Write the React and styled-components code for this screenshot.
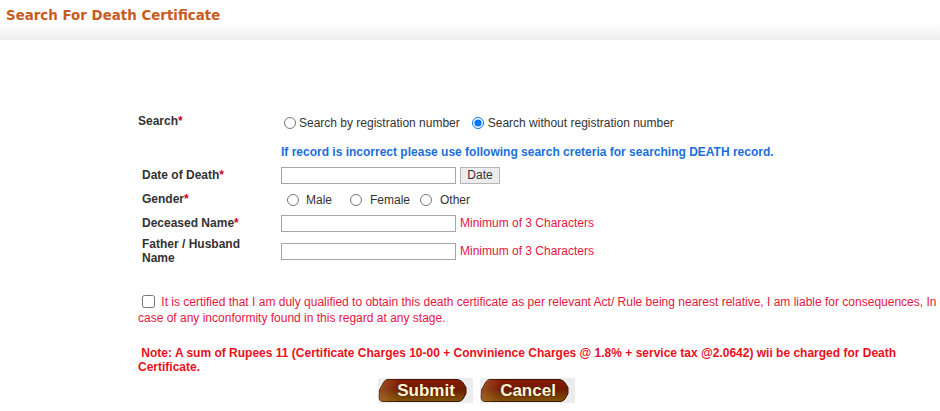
import React from "react";
import styled, { createGlobalStyle } from "styled-components";

const Global = createGlobalStyle`
  html, body { margin: 0; padding: 0; background: #fff; }
  body { font-family: "Liberation Sans", Arial, sans-serif; font-size: 12px; color: #333; }
`;

const Header = styled.div`
  height: 40px;
  background: linear-gradient(to bottom, #ffffff 55%, #efefef 100%);
  padding-left: 6px;
  box-sizing: border-box;
`;

const Title = styled.h1`
  margin: 0;
  padding-top: 6px;
  font-family: "DejaVu Sans", Verdana, sans-serif;
  font-size: 13.4px;
  font-weight: bold;
  color: #c95b1f;
  line-height: 19px;
`;

const Form = styled.form`
  margin: 69px 0 0 138px;
  width: 802px;
`;

const Row = styled.div`
  display: grid;
  grid-template-columns: 143px 1fr;
  align-items: center;
  height: ${(p) => p.$h || 24}px;
`;

const Label = styled.div`
  font-weight: bold;
  color: #333;
  line-height: 14px;
  padding-left: ${(p) => p.$pad ?? 4}px;
  width: ${(p) => p.$w || 130}px;
`;

const Star = styled.span`
  color: #d0021b;
`;

const Field = styled.div`
  display: flex;
  align-items: center;
  padding-top: ${(p) => p.$shift || 0}px;
`;

const Option = styled.label`
  display: inline-flex;
  align-items: center;
  margin-left: ${(p) => p.$ml || 0}px;
  color: #333;
  font-size: 12px;
  cursor: pointer;
`;

const Radio = styled.input.attrs({ type: "radio" })`
  width: 12px;
  height: 12px;
  margin: 0 ${(p) => p.$gap ?? 3}px 0 0;
`;

const Info = styled.div`
  margin: 11px 0 3px 143px;
  height: 16px;
  line-height: 16px;
  font-weight: bold;
  color: #1a6fd9;
`;

const TextBox = styled.input.attrs({ type: "text" })`
  width: 175px;
  height: 17px;
  box-sizing: border-box;
  border: 1px solid #a6a6a6;
  margin: 0;
  padding: 0 2px;
  font-size: 12px;
`;

const SmallButton = styled.button`
  margin-left: 4px;
  width: 40px;
  height: 17px;
  box-sizing: border-box;
  border: 1px solid #b5b5b5;
  background: #ececec;
  font-family: "Liberation Sans", Arial, sans-serif;
  font-size: 12px;
  color: #333;
  padding: 0;
  line-height: 14px;
`;

const Hint = styled.span`
  margin-left: 4px;
  color: #e2173f;
  font-size: 12px;
`;

const Declaration = styled.p`
  margin: 27px 0 0 0;
  line-height: 16px;
  color: #e2173f;
  font-size: 12px;
`;

const Check = styled.input.attrs({ type: "checkbox" })`
  width: 13px;
  height: 13px;
  margin: 0 3px 0 4px;
  vertical-align: -2px;
`;

const Note = styled.p`
  margin: 20px 0 0 0;
  line-height: 14px;
  font-weight: bold;
  color: #e8101c;
  font-size: 12px;
`;

const Actions = styled.div`
  display: flex;
  gap: 7px;
  margin: 4px 0 0 240px;
`;

const ImgButton = styled.button`
  position: relative;
  width: 95px;
  height: 25px;
  padding: 0;
  border: none;
  background: #ececec;
  cursor: pointer;
  font-family: "Liberation Sans", Arial, sans-serif;
  font-weight: bold;
  font-size: 17px;
  color: #fff6d6;
  line-height: 25px;
  text-shadow: 0 0 1px #3a1500;
`;

const Shape = styled.svg`
  position: absolute;
  left: 0;
  top: 0;
`;

const ButtonText = styled.span`
  position: relative;
  display: block;
  text-align: center;
  padding-left: 1px;
`;

const SHAPE =
  "M10 1.5 H79 Q82 1.5 84.5 4 L88 9.5 V15.5 L85 21 Q83 23.5 80 23.5 H5 Q1.5 23.5 1.2 20 L1.5 12 L5.5 4.5 Q7 1.5 10 1.5 Z";

function BrownButton({ id, children }) {
  return (
    <ImgButton type="button">
      <Shape width="95" height="25" viewBox="0 0 95 25">
        <defs>
          <linearGradient id={id} x1="0" y1="0" x2="0" y2="1">
            <stop offset="0" stopColor="#8a1a05" />
            <stop offset="0.45" stopColor="#6e1a02" />
            <stop offset="1" stopColor="#7d5600" />
          </linearGradient>
          <linearGradient id={id + "h"} x1="0" y1="0" x2="1" y2="0">
            <stop offset="0" stopColor="#c07a40" stopOpacity="0.55" />
            <stop offset="0.25" stopColor="#c07a40" stopOpacity="0" />
          </linearGradient>
        </defs>
        <path d={SHAPE} fill={`url(#${id})`} stroke="#3b1603" strokeWidth="1" />
        <path d={SHAPE} fill={`url(#${id}h)`} />
      </Shape>
      <ButtonText>{children}</ButtonText>
    </ImgButton>
  );
}

export default function App() {
  return (
    <>
      <Global />
      <Header>
        <Title>Search For Death Certificate</Title>
      </Header>
      <Form onSubmit={(e) => e.preventDefault()}>
        <Row>
          <Label $pad={0}>
            Search<Star>*</Star>
          </Label>
          <Field $shift={4}>
            <Option $ml={3}>
              <Radio name="mode" $gap={3} />
              Search by registration number
            </Option>
            <Option $ml={12}>
              <Radio name="mode" $gap={4} defaultChecked />
              Search without registration number
            </Option>
          </Field>
        </Row>
        <Info>
          If record is incorrect please use following search creteria for searching DEATH record.
        </Info>
        <Row>
          <Label>
            Date of Death<Star>*</Star>
          </Label>
          <Field>
            <TextBox />
            <SmallButton type="button">Date</SmallButton>
          </Field>
        </Row>
        <Row>
          <Label>
            Gender<Star>*</Star>
          </Label>
          <Field $shift={2}>
            <Option $ml={6}>
              <Radio name="gender" $gap={7} />
              Male
            </Option>
            <Option $ml={18}>
              <Radio name="gender" $gap={8} />
              Female
            </Option>
            <Option $ml={10}>
              <Radio name="gender" $gap={8} />
              Other
            </Option>
          </Field>
        </Row>
        <Row>
          <Label>
            Deceased Name<Star>*</Star>
          </Label>
          <Field>
            <TextBox />
            <Hint>Minimum of 3 Characters</Hint>
          </Field>
        </Row>
        <Row $h={32}>
          <Label $w={110}>Father / Husband Name</Label>
          <Field>
            <TextBox />
            <Hint>Minimum of 3 Characters</Hint>
          </Field>
        </Row>
        <Declaration>
          <Check /> It is certified that I am duly qualified to obtain this death certificate as per
          relevant Act/ Rule being nearest relative, I am liable for consequences, In case of any
          inconformity found in this regard at any stage.
        </Declaration>
        <Note>
          &nbsp;Note: A sum of Rupees 11 (Certificate Charges 10-00 + Convinience Charges @ 1.8% +
          service tax @2.0642) wii be charged for Death Certificate.
        </Note>
        <Actions>
          <BrownButton id="gs">Submit</BrownButton>
          <BrownButton id="gc">Cancel</BrownButton>
        </Actions>
      </Form>
    </>
  );
}
